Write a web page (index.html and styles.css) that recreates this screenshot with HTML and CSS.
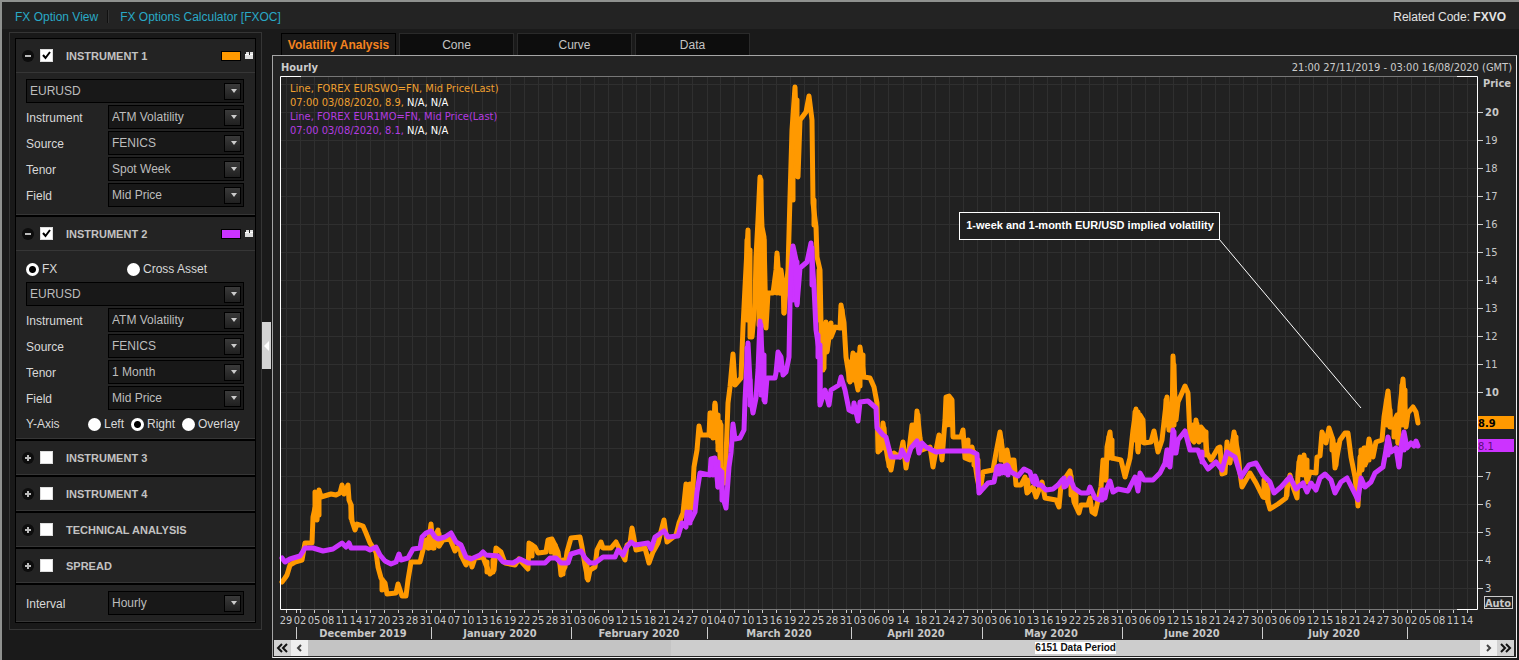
FILE: index.html
```html
<!DOCTYPE html>
<html lang="en">
<head>
<meta charset="utf-8">
<title>FX Volatility</title>
<link rel="stylesheet" href="styles.css">
</head>
<body>
<div class="app">
  <header class="topbar">
    <nav class="links">
      <a href="#view">FX Option View</a>
      <span class="divider"></span>
      <a href="#calc">FX Options Calculator [FXOC]</a>
    </nav>
    <p class="related">Related Code: <b>FXVO</b></p>
  </header>
  <main class="workspace">
    <aside class="sidebar">
      <form class="cards">
        <section class="card">
          <div class="card-head">
            <button type="button" class="toggle minus" aria-label="Collapse"></button>
            <input type="checkbox" class="check" id="i1" checked>
            <label for="i1">INSTRUMENT 1</label>
            <span class="swatch orange"></span>
            <svg class="layers" viewBox="0 0 9 9"><path d="M1 1h3v2H1zM5 1h3v2H5zM0 4h8v4H0z" fill="#ddd"/><path d="M0 3h4v1H0zM5 3h3v1H5z" fill="#fff"/></svg>
          </div>
          <div class="card-body">
            <div class="select"><select aria-label="Currency pair 1"><option>EURUSD</option></select></div>
            <div class="field"><label for="a1">Instrument</label><div class="select"><select id="a1"><option>ATM Volatility</option></select></div></div>
            <div class="field"><label for="a2">Source</label><div class="select"><select id="a2"><option>FENICS</option></select></div></div>
            <div class="field"><label for="a3">Tenor</label><div class="select"><select id="a3"><option>Spot Week</option></select></div></div>
            <div class="field"><label for="a4">Field</label><div class="select"><select id="a4"><option>Mid Price</option></select></div></div>
          </div>
        </section>
        <section class="card">
          <div class="card-head">
            <button type="button" class="toggle minus" aria-label="Collapse"></button>
            <input type="checkbox" class="check" id="i2" checked>
            <label for="i2">INSTRUMENT 2</label>
            <span class="swatch purple"></span>
            <svg class="layers" viewBox="0 0 9 9"><path d="M1 1h3v2H1zM5 1h3v2H5zM0 4h8v4H0z" fill="#ddd"/><path d="M0 3h4v1H0zM5 3h3v1H5z" fill="#fff"/></svg>
          </div>
          <div class="card-body second">
            <div class="asset">
              <label class="radio"><input type="radio" name="asset" checked>FX</label>
              <label class="radio"><input type="radio" name="asset">Cross Asset</label>
            </div>
            <div class="select"><select aria-label="Currency pair 2"><option>EURUSD</option></select></div>
            <div class="field"><label for="b1">Instrument</label><div class="select"><select id="b1"><option>ATM Volatility</option></select></div></div>
            <div class="field"><label for="b2">Source</label><div class="select"><select id="b2"><option>FENICS</option></select></div></div>
            <div class="field"><label for="b3">Tenor</label><div class="select"><select id="b3"><option>1 Month</option></select></div></div>
            <div class="field"><label for="b4">Field</label><div class="select"><select id="b4"><option>Mid Price</option></select></div></div>
            <div class="yaxis">
              <span class="yaxis-name">Y-Axis</span>
              <label class="radio"><input type="radio" name="axis">Left</label>
              <label class="radio"><input type="radio" name="axis" checked>Right</label>
              <label class="radio"><input type="radio" name="axis">Overlay</label>
            </div>
          </div>
        </section>
        <section class="card"><div class="card-head"><button type="button" class="toggle" aria-label="Expand"></button><input type="checkbox" class="check" id="i3"><label for="i3">INSTRUMENT 3</label></div></section>
        <section class="card"><div class="card-head"><button type="button" class="toggle" aria-label="Expand"></button><input type="checkbox" class="check" id="i4"><label for="i4">INSTRUMENT 4</label></div></section>
        <section class="card"><div class="card-head"><button type="button" class="toggle" aria-label="Expand"></button><input type="checkbox" class="check" id="i5"><label for="i5">TECHNICAL ANALYSIS</label></div></section>
        <section class="card"><div class="card-head"><button type="button" class="toggle" aria-label="Expand"></button><input type="checkbox" class="check" id="i6"><label for="i6">SPREAD</label></div></section>
        <section class="card interval">
          <div class="field"><label for="iv">Interval</label><div class="select"><select id="iv"><option>Hourly</option></select></div></div>
        </section>
      </form>
    </aside>
    <button type="button" class="collapse" aria-label="Hide panel"></button>
    <section class="content">
      <div class="tabs">
        <button type="button" class="tab active">Volatility Analysis</button>
        <button type="button" class="tab">Cone</button>
        <button type="button" class="tab">Curve</button>
        <button type="button" class="tab">Data</button>
      </div>
      <div class="panel">
        <div class="panel-head">
          <b>Hourly</b>
          <span>21:00 27/11/2019 - 03:00 16/08/2020 (GMT)</span>
        </div>
        <svg class="chart" id="chart" viewBox="273 76 1243 564" role="img" aria-label="Implied volatility chart">
          <g id="grid"></g>
          <path class="frame" d="M281 76.500H1477M281 609.500H1477"/>
          <g id="ticks"></g>
          <path id="weekRange" class="line week"/>
          <polyline id="week" class="line week"/>
          <path id="monthRange" class="line month"/>
          <polyline id="month" class="line month"/>
          <path class="edge" d="M301 76.500H280.500V609.500H301M1457 76.500H1477.500V609.500H1457"/>
          <g class="legend">
            <text class="t-week" x="290" y="92">Line, FOREX EURSWO=FN, Mid Price(Last)</text>
            <text class="t-week" x="290" y="106">07:00 03/08/2020, 8.9, <tspan class="t-na">N/A, N/A</tspan></text>
            <text class="t-month" x="290" y="120">Line, FOREX EUR1MO=FN, Mid Price(Last)</text>
            <text class="t-month" x="290" y="134">07:00 03/08/2020, 8.1, <tspan class="t-na">N/A, N/A</tspan></text>
          </g>
          <path class="pointer" d="M1219 239L1361 408"/>
          <rect class="note" x="959.500" y="212.500" width="260" height="27"/>
          <text class="note-text" x="1090" y="229">1-week and 1-month EUR/USD implied volatility</text>
          <text class="bold" x="1511" y="87" text-anchor="end">Price</text>
          <rect class="tag-week" x="1478" y="416" width="36" height="13"/>
          <text class="tag-text bold" x="1478" y="427">8.9</text>
          <rect class="tag-month" x="1478" y="439" width="36" height="13"/>
          <text class="tag-text dim" x="1478" y="450">8.1</text>
          <rect class="auto" x="1484.500" y="596.500" width="28" height="12"/>
          <text class="bold" x="1498" y="607" text-anchor="middle">Auto</text>
        </svg>
        <div class="scroller">
          <button type="button" aria-label="First"><svg viewBox="0 0 17 16"><path d="M8 4L4 8l4 4M13 4L9 8l4 4" stroke="#111" stroke-width="2" fill="none"/></svg></button>
          <button type="button" class="light" aria-label="Back"><svg viewBox="0 0 17 16"><path d="M10 5L7 8l3 3" stroke="#444" stroke-width="2" fill="none"/></svg></button>
          <div class="track"><div class="thumb"><span>6151 Data Period</span></div></div>
          <button type="button" class="light" aria-label="Forward"><svg viewBox="0 0 17 16"><path d="M7 5l3 3-3 3" stroke="#444" stroke-width="2" fill="none"/></svg></button>
          <button type="button" aria-label="Last"><svg viewBox="0 0 17 16"><path d="M4 4l4 4-4 4M9 4l4 4-4 4" stroke="#111" stroke-width="2" fill="none"/></svg></button>
        </div>
      </div>
    </section>
  </main>
</div>
<script src="chart.js"></script>
</body>
</html>
```

FILE: styles.css
```css
* { box-sizing: border-box; }
body {
  margin: 0;
  background: #1a1a1a;
  color: #d8d8d8;
  font: 12px/14px "Liberation Sans", Arial, sans-serif;
}
button, select, input { font: inherit; margin: 0; padding: 0; }
.app {
  min-height: 100vh;
  border: solid #8f918f;
  border-width: 2px 0 0 2px;
  padding-bottom: 2px;
  display: flex;
  flex-direction: column;
}
.topbar {
  display: flex;
  justify-content: space-between;
  align-items: center;
  height: 27px;
  padding: 2px 13px 0 13px;
  background: #232323;
}
.links { display: flex; align-items: center; gap: 9px; }
.links a { color: #29a9c6; text-decoration: none; }
.divider { width: 2px; height: 13px; margin-right: 2px; background: #101010; border-right: 1px solid #333; }
.related { margin: 0; color: #e4e4e4; }
.workspace { display: flex; align-items: flex-start; flex: 1; padding: 3px 2px 0 7px; }

/* Settings column */
.sidebar { width: 253px; flex: none; border: 1px solid #353535; padding: 5px 5px 6px; background: #191919; }
.cards { border: 1px solid #000; background: #000; display: flex; flex-direction: column; gap: 2px; }
.card { background: #232323; border-bottom: 1px solid #363636; }
.card-head { display: flex; align-items: center; height: 33px; padding: 0 1px 0 6px; }
.card-head label { color: #c2c2c2; font-size: 11px; font-weight: bold; flex: 1; margin-left: 13px; }
.card-head .check { margin-left: 6px; }
.toggle {
  position: relative;
  width: 12px; height: 12px;
  border: 0; border-radius: 50%;
  background: #0d0d0d;
}
.toggle::before { content: ""; position: absolute; left: 3px; top: 5px; width: 6px; height: 2px; background: #bbb; }
.toggle::after { content: ""; position: absolute; left: 5px; top: 3px; width: 2px; height: 6px; background: #bbb; }
.toggle.minus::after { display: none; }
.check { appearance: none; width: 13px; height: 13px; background: #fff; border: 1px solid #ddd; }
.check:checked {
  background: #fff url("data:image/svg+xml,%3Csvg xmlns='http://www.w3.org/2000/svg' viewBox='0 0 11 11'%3E%3Cpath d='M2 5l2.500 3L9 2' fill='none' stroke='%23000' stroke-width='2'/%3E%3C/svg%3E");
}
.swatch { width: 20px; height: 10px; border: 1px solid #000; }
.orange { background: #ff9900; }
.purple { background: #cc33ff; }
.layers { width: 9px; height: 9px; margin-left: 4px; }
.card-body { border-top: 1px solid #363636; padding: 6px 11px 7px 10px; display: flex; flex-direction: column; gap: 2px; }
.card-body.second { padding-top: 11px; }
.field { display: flex; align-items: center; justify-content: space-between; }
.field label { padding-top: 1px; }
.field .select { width: 136px; }
.select { position: relative; height: 24px; }
.select select {
  appearance: none;
  width: 100%; height: 24px;
  padding: 0 20px 0 3px;
  border: 1px solid #000; border-radius: 0;
  background: #181818;
  color: #bdbdbd;
}
.select::before {
  content: ""; position: absolute; right: 3px; top: 4px;
  width: 15px; height: 15px; border: 1px solid #000;
  background: linear-gradient(#3a3a3a, #202020); pointer-events: none;
}
.select::after {
  content: ""; position: absolute; right: 7px; top: 10px;
  border: solid transparent; border-width: 4px 3px 0; border-top-color: #ccc;
  pointer-events: none;
}
.radio { display: flex; align-items: center; gap: 3px; }
.radio input { appearance: none; width: 13px; height: 13px; border-radius: 50%; background: #fff; border: 0; }
.radio input:checked { background: radial-gradient(circle, #000 0 3px, #fff 4px); }
.asset { display: grid; grid-template-columns: 101px 1fr; padding-bottom: 4px; }
.yaxis { display: flex; align-items: center; gap: 7px; padding-top: 5px; }
.yaxis-name { width: 55px; }
.card.interval { padding: 6px 11px 6px 10px; }

.collapse {
  position: relative; align-self: center;
  width: 9px; height: 47px; border: 0;
  background: #d4d4d4;
}
.collapse::after {
  content: ""; position: absolute; left: 2px; top: 19px;
  border: solid transparent; border-width: 5px 5px 5px 0; border-right-color: #fff;
}

/* Chart column */
.content { flex: 1; min-width: 0; padding-left: 1px; }
.tabs { display: flex; gap: 3px; padding-left: 9px; height: 23px; padding-top: 1px; }
.tab { width: 115px; border: 1px solid #2a2a2a; border-bottom: 0; background: #0d0d0d; color: #c4c4c4; }
.tab.active { background: #191919; border-color: #000; color: #f5831f; font-weight: bold; }
.panel {
  border: 1px solid #a5a5a5; border-right-color: #eee; border-bottom-color: #eee;
  background: #232323;
  font-family: "DejaVu Sans Condensed", Tahoma, "Noto Sans", sans-serif;
  font-size: 11px;
}
.panel-head { display: flex; justify-content: space-between; align-items: center; height: 20px; padding: 3px 4px 0 8px; color: #ccc; }
.chart { display: block; width: 100%; height: auto; font-size: 11px; }
.chart text { fill: #c8c8c8; }
.chart .gridline { stroke: #2f2f2f; }
.chart .band { fill: #212121; }
.chart .tick { stroke: #ccc; }
.chart .frame { stroke: #777; }
.chart .edge { stroke: #fff; fill: none; }
.line { fill: none; stroke-width: 5px; stroke-linejoin: round; stroke-linecap: round; }
.week { stroke: #ff9900; }
.month { stroke: #cc33ff; }
.chart .t-week { fill: #f0a030; }
.chart .t-month { fill: #b43ce0; }
.chart .t-na { fill: #fff; }
.chart .bold { font-weight: bold; }
.mid { text-anchor: middle; }
.pointer { stroke: #fff; }
.note { fill: #202020; stroke: #fff; }
.chart .note-text { fill: #fff; text-anchor: middle; font: bold 11px "Liberation Sans", Arial, sans-serif; }
.tag-week { fill: #ff9900; }
.tag-month { fill: #cc33ff; }
.chart .tag-text { fill: #000; }
.chart .tag-text.dim { fill: #5a0f78; }
.auto { fill: none; stroke: #ccc; }
.scroller { display: flex; height: 17px; padding: 0 2px 1px 1px; }
.scroller button { width: 17px; border: 0; background: #d2d2d2; }
.scroller button.light { background: #efefef; }
.scroller svg { display: block; width: 17px; height: 16px; }
.track { flex: 1; background: #c4c4c4; }
.thumb { width: 69%; height: 100%; margin-left: auto; background: #cdcdcd; display: flex; align-items: center; justify-content: center; }
.thumb span { background: #fff; color: #111; font: bold 10px/12px "Liberation Sans", Arial, sans-serif; }
```

FILE: chart.js
```js
const NS = "http://www.w3.org/2000/svg";
const grid = document.getElementById("grid");
const ticks = document.getElementById("ticks");

function add(parent, name, attrs, text) {
  const el = document.createElementNS(NS, name);
  for (const key in attrs) el.setAttribute(key, attrs[key]);
  if (text) el.textContent = text;
  parent.appendChild(el);
}

const days = `286:29 300:02 314:05 328:08 342:11 356:14 370:17 384:20 398:23 412:28 426:31 440:04 454:07 468:10 482:13 496:16
510:19 524:22 538:25 552:28 566:31 580:03 594:06 608:09 622:12 636:15 650:18 664:21 678:24 692:27 707:01 720:04 734:07 748:10
762:13 776:16 790:19 804:22 818:25 832:28 846:31 860:03 874:06 888:09 903:14 921:18 935:21 949:24 963:27 977:30 991:03 1005:06
1019:10 1033:13 1047:16 1061:19 1075:22 1089:25 1103:28 1117:31 1131:03 1145:06 1159:09 1173:12 1187:15 1201:18 1215:21 1229:24
1243:27 1257:30 1271:03 1285:06 1299:09 1313:12 1327:15 1341:18 1355:21 1369:24 1383:27 1397:30 1411:02 1425:05 1439:08 1453:11 1467:14`
  .split(/\s+/).map(d => d.split(":"));

add(grid, "rect", { class: "band", x: 281, y: 77, width: 1196, height: 532 });
for (const [x, label] of days) {
  add(grid, "path", { class: "gridline", d: `M${+x + 0.5} 77V609` });
  add(ticks, "path", { class: "tick", d: `M${+x + 0.5} 610V613` });
  add(ticks, "text", { class: "mid", x: x, y: 624 }, label);
}
for (let v = 3; v <= 21; v++) {
  const y = 672 - 28 * v;
  add(grid, "path", { class: "gridline", d: `M281 ${y + 0.5}H1477` });
  if (v === 21 || v === 8 || v === 9) continue;
  add(ticks, "path", { class: "tick", d: `M1478 ${y + 0.5}H1483` });
  add(ticks, "text", { class: v % 10 ? "" : "bold", x: 1485, y: y + 4 }, String(v));
}
for (const x of [296, 431, 571, 707, 851, 982, 1122, 1262, 1407]) {
  add(ticks, "path", { class: "tick", d: `M${x + 0.5} 610V613M${x + 0.5} 627V639` });
}
[[363, "December 2019"], [500, "January 2020"], [639, "February 2020"], [779, "March 2020"], [916, "April 2020"],
 [1051, "May 2020"], [1192, "June 2020"], [1334, "July 2020"]].forEach(([x, label]) =>
  add(ticks, "text", { class: "mid bold", x: x, y: 637 }, label));

const week = `282,582 285,578 287,575 290,565 295,562 302,560 305,543 312,543 313,517 315,508 317,520 319,490 321,497 331,494
336,495 340,493 342,485 344,494 348,485 349,500 351,505 352,521 355,530 357,524 363,526 366,533 370,543 376,552 378,567 381,578 385,583
387,594 396,593 398,584 402,596 406,596 408,580 411,562 420,562 423,550 426,540 428,548 431,524 433,548 436,534 438,530 439,546 443,540
450,539 455,551 460,545 461,555 466,565 470,558 472,567 475,558 483,557 486,565 490,574 494,570 496,548 501,552 505,563 515,565 519,559
528,569 529,543 535,547 538,553 546,552 548,540 552,539 555,545 558,552 560,565 561,575 565,567 567,552 571,538 580,537 582,547 585,565
588,580 590,570 595,567 597,550 601,542 603,548 611,548 616,542 621,552 625,560 627,545 630,543 632,528 636,550 645,548 649,563 653,552
658,543 664,520 667,542 676,535 679,523 683,513 686,484 687,508 690,484 692,508 694,467 697,450 699,426 701,435 709,435 710,413 713,438
715,403 718,443 720,422 720,467 723,470 725,483 727,430 728,403 730,387 733,354 735,385 741,378 743,327 745,287 748,230 749,303 752,337
755,303 756,257 758,220 760,177 762,227 764,237 766,328 768,293 773,293 776,270 777,253 780,293 781,270 783,285 784,313 786,290 788,270
790,197 792,130 795,87 798,177 800,120 806,112 809,96 812,120 813,203 816,227 817,257 820,270 821,323 823,370 826,322 827,352 831,323
831,337 835,327 840,328 841,305 844,323 846,357 850,382 853,353 856,380 858,390 860,347 864,377 870,378 874,387 877,403 878,452 881,448
883,423 886,448 888,460 891,470 894,453 900,457 903,442 906,468 909,450 912,425 915,440 917,411 920,438 922,450 930,447 933,467 937,445
939,435 942,460 945,420 946,397 949,396 952,400 953,437 961,437 963,430 965,458 970,460 972,447 975,463 977,477 980,492 983,472 993,470
996,453 1000,432 1004,460 1007,450 1010,467 1014,460 1016,485 1021,485 1025,477 1027,493 1033,487 1036,497 1042,482 1045,498 1056,500
1059,507 1061,485 1066,477 1070,471 1074,502 1079,513 1081,505 1088,505 1090,498 1092,512 1095,514 1098,500 1101,487 1103,460 1106,480
1107,447 1110,432 1112,458 1121,460 1125,477 1130,458 1133,430 1136,409 1138,452 1140,415 1143,420 1144,443 1151,442 1154,431 1158,452
1162,440 1165,413 1167,397 1169,430 1172,427 1173,356 1176,420 1178,402 1185,386 1188,393 1190,437 1194,442 1196,420 1199,442 1201,427
1205,432 1207,453 1211,460 1218,448 1220,447 1222,474 1225,473 1227,442 1230,463 1234,432 1238,453 1240,473 1242,487 1250,473 1256,483
1263,497 1267,498 1270,509 1278,504 1286,498 1288,483 1290,475 1293,487 1297,498 1298,473 1300,457 1302,473 1304,455 1307,482 1310,472
1316,473 1317,457 1320,456 1322,432 1326,443 1329,428 1333,440 1335,468 1340,440 1345,433 1348,433 1351,457 1355,477 1358,506 1360,457
1362,470 1364,448 1366,463 1369,439 1373,457 1376,442 1382,440 1384,417 1388,391 1391,427 1397,415 1398,443 1400,407 1403,379 1406,427
1408,413 1413,407 1416,412 1418,423`;

const month = `282,558 285,562 290,559 300,556 305,548 313,548 323,551 333,549 342,543 346,547 349,543 351,548 366,548 370,550 376,547
380,555 385,561 391,564 396,562 399,554 401,560 408,558 413,549 420,548 422,537 426,533 431,531 435,537 438,539 445,537 451,533 456,542
461,545 466,557 471,559 480,555 483,552 486,555 498,556 503,562 513,563 520,559 528,563 545,563 550,558 556,558 561,563 568,563 571,554
581,551 585,558 590,563 595,563 603,557 615,557 618,550 623,555 626,548 631,542 635,545 648,543 651,549 655,537 664,531 668,537 678,536
682,523 686,527 687,512 691,520 695,512 697,492 700,473 710,475 711,459 715,458 718,487 720,470 723,498 726,508 729,467 731,453 733,424
735,439 740,438 744,430 745,400 748,343 751,400 753,413 756,398 758,370 760,321 763,370 765,402 767,378 775,378 776,373 778,352 781,357
783,375 786,372 789,357 790,303 791,270 793,246 796,260 797,305 800,268 807,262 811,243 814,287 816,330 820,357 820,405 825,390 829,405
831,390 839,385 841,377 845,390 849,410 853,412 854,403 858,421 860,402 868,401 876,408 877,428 883,435 886,437 891,457 900,457 902,450
907,460 911,448 917,441 919,453 922,443 926,447 936,452 946,451 970,451 977,454 979,493 988,483 994,482 997,467 1001,466 1002,473
1004,466 1005,473 1007,465 1011,472 1018,476 1024,469 1030,472 1033,482 1036,478 1038,485 1041,485 1046,490 1053,489 1058,485 1062,480
1066,486 1070,478 1074,488 1081,493 1088,493 1090,487 1095,498 1100,500 1103,490 1105,498 1107,488 1110,481 1113,492 1118,489 1128,491
1135,477 1138,491 1140,473 1144,480 1153,480 1160,473 1165,463 1167,450 1170,467 1173,430 1176,453 1178,440 1185,431 1190,450 1198,450
1201,458 1208,469 1216,462 1222,470 1227,452 1235,457 1241,477 1249,465 1256,463 1263,475 1270,482 1274,493 1281,487 1290,477 1296,489
1303,483 1307,492 1311,483 1316,490 1320,478 1325,474 1331,480 1335,493 1341,482 1347,478 1353,490 1358,500 1361,478 1365,487 1371,482
1375,473 1383,467 1386,450 1388,437 1391,452 1396,448 1399,467 1401,447 1404,432 1407,448 1411,443 1414,446 1416,441 1418,446`;

// Intraday ranges: x, high, low
const weekRange = [
  [315, 492, 515], [319, 493, 515], [351, 505, 518], [382, 580, 590], [429, 538, 548], [434, 535, 548], [439, 534, 546],
  [462, 548, 556], [487, 562, 572], [493, 560, 572], [532, 545, 556], [551, 542, 552], [555, 545, 556], [563, 560, 574],
  [587, 565, 578], [688, 486, 512], [691, 486, 508], [711, 413, 436], [715, 405, 436], [718, 415, 450], [721, 425, 465],
  [724, 470, 480], [747, 240, 320], [750, 250, 337], [759, 220, 325], [761, 180, 280], [764, 240, 325], [777, 257, 293],
  [780, 272, 293], [784, 285, 313], [793, 130, 200], [797, 100, 176], [814, 200, 225], [819, 270, 320], [824, 325, 368],
  [827, 325, 350], [830, 325, 337], [842, 310, 328], [849, 362, 380], [853, 356, 380], [856, 355, 378], [860, 352, 386],
  [863, 355, 377], [880, 430, 450], [884, 428, 448], [889, 450, 466], [914, 425, 445], [918, 415, 440], [947, 399, 425],
  [951, 399, 425], [968, 440, 458], [974, 452, 465], [978, 460, 480], [1001, 440, 460], [1005, 453, 462], [1012, 460, 468],
  [1028, 480, 492], [1071, 476, 495], [1076, 490, 505], [1105, 462, 480], [1109, 437, 458], [1112, 440, 458],
  [1135, 412, 440], [1138, 412, 450], [1142, 420, 442], [1166, 400, 425], [1170, 420, 430], [1174, 365, 425],
  [1193, 425, 440], [1197, 424, 440], [1202, 430, 440], [1206, 432, 455], [1228, 446, 460], [1233, 440, 455],
  [1236, 437, 460], [1264, 480, 496], [1268, 485, 502], [1287, 480, 495], [1299, 462, 475], [1303, 458, 475],
  [1307, 460, 480], [1332, 438, 450], [1336, 445, 465], [1361, 450, 470], [1365, 448, 465], [1369, 443, 460],
  [1387, 400, 425], [1390, 410, 427], [1394, 420, 437], [1398, 417, 443], [1402, 385, 425], [1405, 390, 425]
];
const monthRange = [
  [690, 512, 523], [713, 460, 475], [718, 462, 487], [722, 472, 500], [747, 348, 395], [750, 380, 405], [761, 325, 395],
  [764, 355, 400], [780, 356, 370], [793, 250, 300], [797, 262, 303], [812, 248, 285], [818, 335, 357], [820, 345, 402],
  [999, 466, 474], [1008, 466, 475], [1035, 476, 484], [1064, 478, 487], [1102, 490, 500], [1168, 450, 465],
  [1174, 432, 453], [1202, 452, 462], [1388, 440, 455], [1399, 450, 465], [1404, 436, 450]
];
const toPath = bars => bars.map(([x, hi, lo]) => `M${x} ${hi}V${lo}`).join("");

document.getElementById("week").setAttribute("points", week);
document.getElementById("month").setAttribute("points", month);
document.getElementById("weekRange").setAttribute("d", toPath(weekRange));
document.getElementById("monthRange").setAttribute("d", toPath(monthRange));
```
